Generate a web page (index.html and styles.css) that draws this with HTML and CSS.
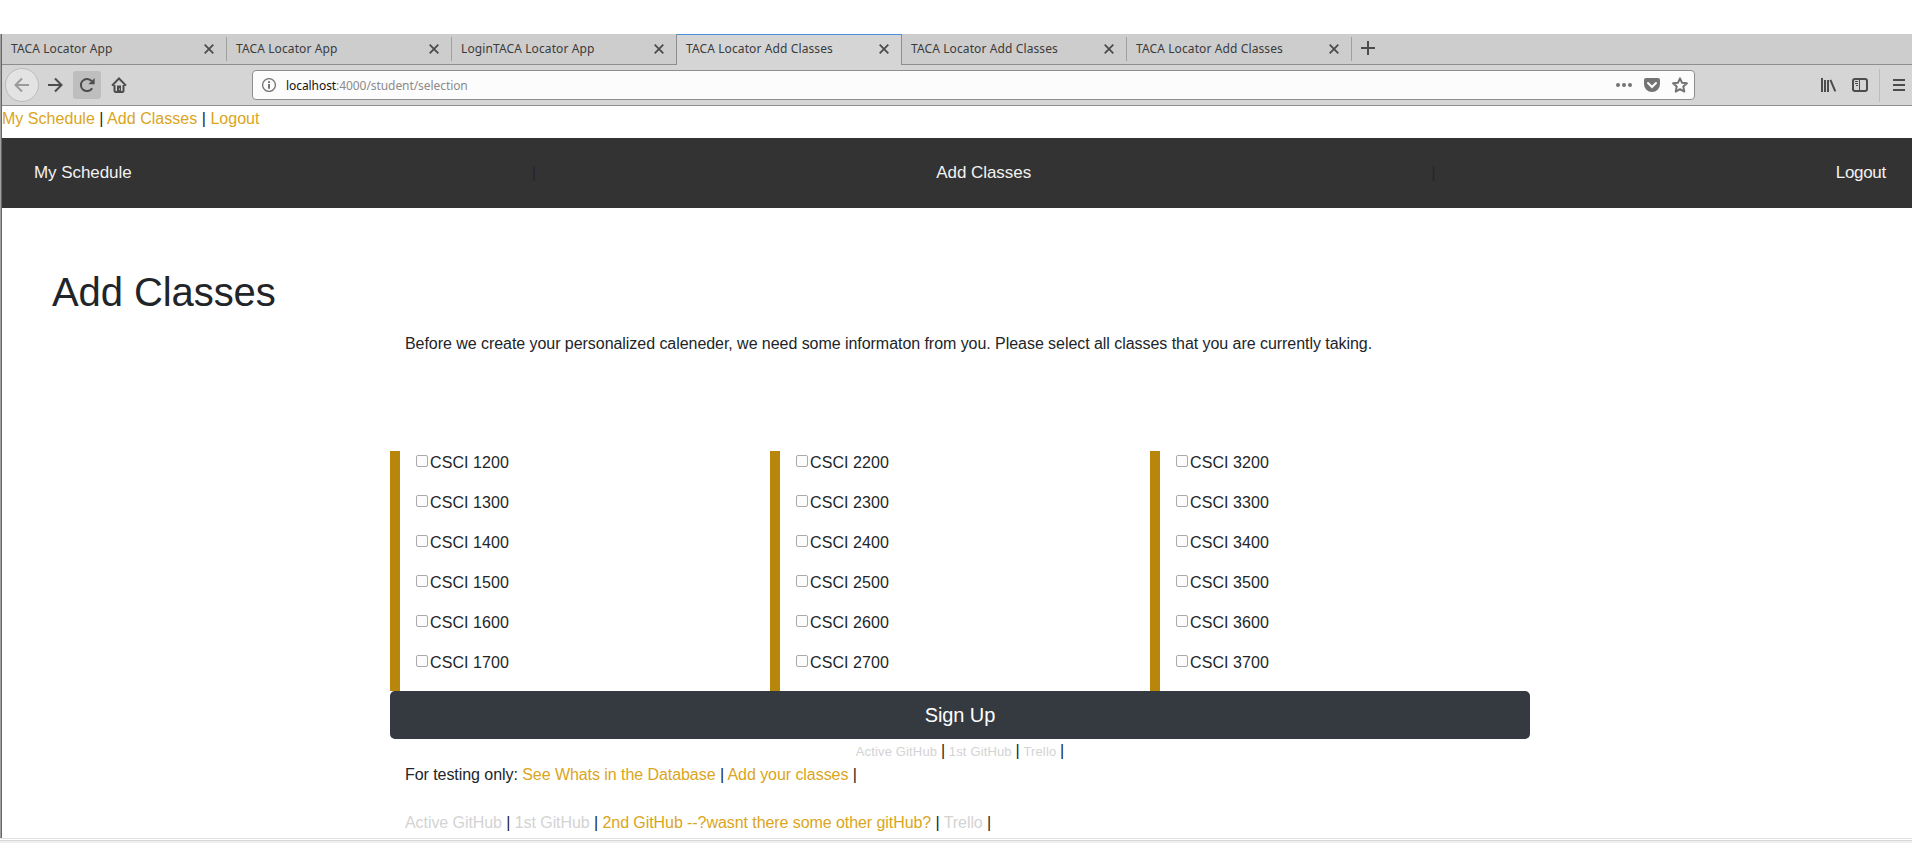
FILE: index.html
```html
<!DOCTYPE html>
<html lang="en">
<head>
<meta charset="utf-8">
<title>TACA Locator Add Classes</title>
<link rel="stylesheet" href="styles.css">
</head>
<body>
<div class="window">
  <div class="tabs">
    <div class="tab"><span>TACA Locator App</span><svg class="close" viewBox="0 0 10 10"><path d="M.7.7l8.6 8.6M9.3.7L.7 9.3"/></svg></div>
    <div class="tab"><span>TACA Locator App</span><svg class="close" viewBox="0 0 10 10"><path d="M.7.7l8.6 8.6M9.3.7L.7 9.3"/></svg></div>
    <div class="tab before-active"><span>LoginTACA Locator App</span><svg class="close" viewBox="0 0 10 10"><path d="M.7.7l8.6 8.6M9.3.7L.7 9.3"/></svg></div>
    <div class="tab active"><span>TACA Locator Add Classes</span><svg class="close" viewBox="0 0 10 10"><path d="M.7.7l8.6 8.6M9.3.7L.7 9.3"/></svg></div>
    <div class="tab"><span>TACA Locator Add Classes</span><svg class="close" viewBox="0 0 10 10"><path d="M.7.7l8.6 8.6M9.3.7L.7 9.3"/></svg></div>
    <div class="tab"><span>TACA Locator Add Classes</span><svg class="close" viewBox="0 0 10 10"><path d="M.7.7l8.6 8.6M9.3.7L.7 9.3"/></svg></div>
    <div class="new-tab"><svg width="14" height="14" viewBox="0 0 14 14"><path d="M7 0v14M0 7h14"/></svg></div>
  </div>
  <div class="toolbar">
    <div class="back"><svg width="16" height="16" viewBox="0 0 16 16"><path d="M15 8H1.5M8 1.5L1.5 8 8 14.5"/></svg></div>
    <div class="tool forward"><svg width="16" height="16" viewBox="0 0 16 16"><path d="M1 8h13.5M8 1.5L14.5 8 8 14.5"/></svg></div>
    <div class="tool reload"><svg width="16" height="16" viewBox="0 0 16 16"><path d="M13.2 11.2A6.1 6.1 0 1 1 12.6 4"/><path class="solid" d="M15.6 1v6.2H9.4z"/></svg></div>
    <div class="tool home"><svg width="16" height="16" viewBox="0 0 16 16"><path d="M1 8.6L8 1.5l7 7.1M3.5 8v5.5q0 1.5 1.5 1.5h6q1.5 0 1.5-1.5V8"/><path class="solid" d="M6 8.5h4V15H6z"/><path class="hole" d="M8 11.5h1v1.2H8z"/></svg></div>
    <div class="urlbar">
      <svg class="info" width="14" height="14" viewBox="0 0 14 14"><circle cx="7" cy="7" r="6.4"/><path class="letter" d="M7 6v4.8M7 3.2v1.8"/></svg>
      <span class="url"><b>localhost</b>:4000/student/selection</span>
      <svg class="dots" width="16" height="16" viewBox="0 0 16 16"><circle cx="2" cy="8" r="2"/><circle cx="8" cy="8" r="2"/><circle cx="14" cy="8" r="2"/></svg>
      <svg class="pocket" width="16" height="16" viewBox="0 0 16 16"><path d="M2 1h12q2 0 2 2v4A8 8 0 0 1 0 7V3q0-2 2-2z"/><path class="check" d="M4 6l4 4 4-4"/></svg>
      <svg class="star" width="16" height="16" viewBox="0 0 16 16"><path d="M8 1.3l2.1 4.5 4.8.5-3.6 3.3 1 5L8 12.2l-4.3 2.4 1-5L1.1 6.3l4.8-.5z"/></svg>
    </div>
    <svg class="library" width="16" height="16" viewBox="0 0 16 16"><path d="M1 1v14M4 3v12M7 3v12M9.4 2.8l4.9 11.6"/></svg>
    <svg class="sidebar" width="16" height="16" viewBox="0 0 16 16"><rect x="1" y="2" width="14" height="12" rx="2"/><path class="thin" d="M7.5 2v12M3 4.5h3M3 6.5h3M4 8.5h2"/></svg>
    <i class="divider"></i>
    <svg class="menu" width="12" height="16" viewBox="0 0 12 16"><path d="M0 3h12M0 8h12M0 13h12"/></svg>
  </div>
  <main class="page">
    <div class="top-links"><a>My Schedule</a> | <a>Add Classes</a> | <a>Logout</a></div>
    <nav class="navbar"><a>My Schedule</a><span>|</span><a>Add Classes</a><span>|</span><a class="logout">Logout</a></nav>
    <h1>Add Classes</h1>
    <div class="container">
      <p class="intro">Before we create your personalized caleneder, we need some informaton from you. Please select all classes that you are currently taking.</p>
      <form>
        <div class="columns">
          <div class="column">
            <label><input type="checkbox">CSCI 1200</label><label><input type="checkbox">CSCI 1300</label><label><input type="checkbox">CSCI 1400</label><label><input type="checkbox">CSCI 1500</label><label><input type="checkbox">CSCI 1600</label><label><input type="checkbox">CSCI 1700</label>
          </div>
          <div class="column">
            <label><input type="checkbox">CSCI 2200</label><label><input type="checkbox">CSCI 2300</label><label><input type="checkbox">CSCI 2400</label><label><input type="checkbox">CSCI 2500</label><label><input type="checkbox">CSCI 2600</label><label><input type="checkbox">CSCI 2700</label>
          </div>
          <div class="column">
            <label><input type="checkbox">CSCI 3200</label><label><input type="checkbox">CSCI 3300</label><label><input type="checkbox">CSCI 3400</label><label><input type="checkbox">CSCI 3500</label><label><input type="checkbox">CSCI 3600</label><label><input type="checkbox">CSCI 3700</label>
          </div>
        </div>
        <button type="button" class="signup">Sign Up</button>
      </form>
      <div class="small-links"><a>Active GitHub</a> | <a>1st GitHub</a> | <a>Trello</a> |</div>
      <div class="testing">For testing only: <a>See Whats in the Database</a> | <a>Add your classes</a> |</div>
      <div class="footer-links"><a class="muted">Active GitHub</a> | <a class="muted">1st GitHub</a> | <a>2nd GitHub --?wasnt there some other gitHub?</a> | <a class="muted">Trello</a> |</div>
    </div>
  </main>
</div>
<div class="desktop-edge"></div>
</body>
</html>
```
FILE: styles.css
```css
* { box-sizing: border-box; }
body { margin: 0; padding-top: 34px; height: 843px; overflow: hidden; background: #fff; color: #212529; font: 16px/24px "Liberation Sans", Arial, sans-serif; }
svg { display: block; flex: none; fill: none; stroke: #4c4c4c; stroke-width: 2; }
.window { display: flex; flex-direction: column; height: 804px; padding-left: 1px; border-left: 1px solid #a0a0a0; background: #666; }

.tabs { display: flex; flex: none; height: 31px; background: #cdcdcd; border-bottom: 1px solid #8e8e8e; font: 12px/30px "Noto Sans", sans-serif; letter-spacing: .11px; color: #3b3b3b; }
.tab { display: flex; align-items: center; justify-content: space-between; width: 225px; height: 30px; padding: 0 13px 0 9px; background: linear-gradient(#a0a0a0, #a0a0a0) right 0 top 3px / 1px 24px no-repeat; }
.tab span { white-space: nowrap; }
.tab.before-active { background: none; }
.tab.active { height: 31px; margin-left: -1px; width: 226px; padding: 0 12px 2px 9px; background: #d5d5d5; border: solid #8e8e8e; border-width: 1px 1px 0; border-top-color: #4a90d9; }
.close { width: 10px; height: 10px; stroke-width: 1.8; }
.new-tab { padding: 7px 0 0 9px; }

.toolbar { display: flex; flex: none; align-items: center; height: 41px; background: #d5d5d5; border-bottom: 1px solid #8e8e8e; padding: 0 7px 0 3px; }
.back { display: grid; place-items: center; width: 34px; height: 34px; border: 1px solid #bbb; border-radius: 50%; background: #e3e3e3; }
.back svg { stroke: #9a9a9a; }
.tool { display: grid; place-items: center; width: 28px; height: 28px; border-radius: 3px; }
.forward { margin-left: 2px; }
.reload { margin-left: 4px; background: #bebebe; }
.home { margin-left: 4px; }
.solid { fill: #4c4c4c; stroke: none; }
.hole { fill: #d5d5d5; stroke: none; }
.urlbar { display: flex; align-items: center; width: 1443px; height: 30px; margin-left: 119px; padding: 0 6px 0 9px; border: 1px solid #8e8e8e; border-radius: 4px; background: #fcfcfc; font: 12px/28px "Noto Sans", sans-serif; color: #8b8b8b; }
.url { flex: 1; margin-left: 10px; padding-top: 1px; letter-spacing: -.07px; }
.url b { font-weight: 400; color: #111; }
.info { stroke: #777; stroke-width: 1.3; }
.letter { stroke: #666; stroke-width: 1.8; }
.dots, .pocket { fill: #737373; stroke: none; }
.pocket { margin: 0 12px; }
.check { fill: none; stroke: #fcfcfc; stroke-width: 2; stroke-linecap: round; }
.star { stroke: #737373; stroke-linejoin: round; }
.library { margin-left: 126px; }
.sidebar { margin-left: 15px; }
.thin { stroke-width: 1; }
.divider { width: 1px; height: 33px; margin: 0 13px 0 11px; background: #bcbcbc; }

.page { flex: 1; min-height: 0; background: #fff; }
a { color: #daa520; }
.top-links { height: 32px; padding-top: 1px; white-space: nowrap; letter-spacing: .03px; }
.navbar { display: flex; align-items: center; justify-content: space-between; height: 70px; padding: 0 26px 0 32px; background: #333; color: #24272d; font-size: 17px; }
.navbar a { color: #f2f2f2; letter-spacing: -.06px; }
.navbar .logout { letter-spacing: -.3px; }
h1 { margin: 60px 0 0 50px; font-size: 40px; line-height: 48px; font-weight: 400; letter-spacing: -.08px; }
.container { width: 1140px; margin: 16px 0 0 388px; }
.intro { margin: 0 15px 95px; white-space: nowrap; letter-spacing: -.05px; }
.columns { display: grid; grid-template-columns: repeat(3, 380px); height: 240px; }
.column { border-left: 10px solid #b8860b; padding-left: 16px; }
label { display: flex; height: 40px; letter-spacing: .08px; }
input { appearance: none; width: 12px; height: 12px; margin: 4px 2px 0 0; border: 1px solid #aaa; border-radius: 2px; background: #fcfcfc; }
.signup { display: block; width: 1140px; height: 48px; padding: 0; border: 0; border-radius: 5px; background: #343a40; color: #fff; font: 20px/48px "Liberation Sans", Arial, sans-serif; letter-spacing: -.1px; }
.small-links { height: 24px; text-align: center; word-spacing: -.7px; }
.small-links a { font-size: 13px; color: #d3d3d3; letter-spacing: .15px; word-spacing: 0; }
.testing { padding-left: 15px; letter-spacing: -.06px; }
.footer-links { padding: 24px 0 0 15px; letter-spacing: -.07px; }
.footer-links .muted { color: #d3d3d3; }
.desktop-edge { height: 5px; background: linear-gradient(#e0e0e0 1px, #fff 1px 2px, #d8d8d8 2px 3px, #efefef 3px); }
```
